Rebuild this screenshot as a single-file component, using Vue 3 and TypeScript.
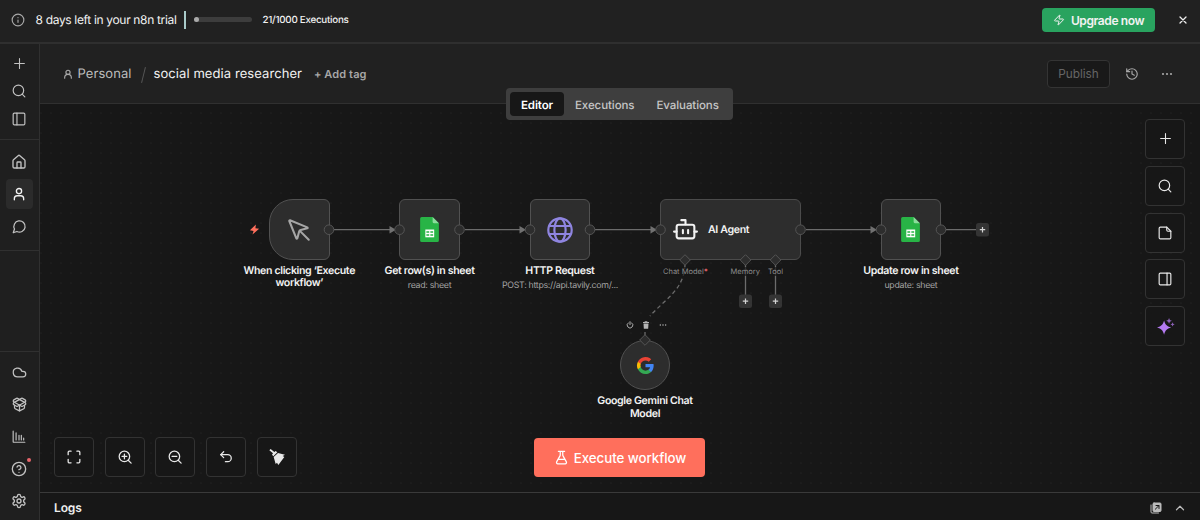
<script setup lang="ts">
import { h, type FunctionalComponent } from 'vue'

// Glyph bodies on a 24-unit grid, stroked with the current text colour.
const glyphs: Record<string, string> = {
  info: '<circle cx="12" cy="12" r="10"/><path d="M12 16v-4M12 8h.01"/>',
  plus: '<path d="M3 12h18M12 3v18"/>',
  search: '<circle cx="11" cy="11" r="9"/><path d="m22 22-4.6-4.6"/>',
  panelLeft: '<rect x="2" y="2" width="20" height="20" rx="2"/><path d="M8.500 2v20"/>',
  panelRight: '<rect x="2" y="2" width="20" height="20" rx="2"/><path d="M15.500 2v20"/>',
  home: '<path d="M15 21v-8a1 1 0 0 0-1-1h-4a1 1 0 0 0-1 1v8"/><path d="M3 10a2 2 0 0 1 .7-1.500l7-6a2 2 0 0 1 2.600 0l7 6A2 2 0 0 1 21 10v9a2 2 0 0 1-2 2H5a2 2 0 0 1-2-2z"/>',
  user: '<circle cx="12" cy="7" r="4.500"/><path d="M20 22v-2a5 5 0 0 0-5-5H9a5 5 0 0 0-5 5v2"/>',
  userSmall: '<circle cx="12" cy="8" r="5"/><path d="M4 22v-1a8 8 0 0 1 16 0v1"/>',
  chat: '<path d="M7.900 20A9 9 0 1 0 4 16.100L2 22Z"/>',
  cloud: '<path d="M17.500 19H9a7 7 0 1 1 6.710-9h1.790a4.500 4.500 0 1 1 0 9Z"/>',
  box: '<path d="M12 22v-9"/><path d="M15.170 2.210a1.670 1.670 0 0 1 1.630 0L21 4.570a1.930 1.930 0 0 1 0 3.360L8.820 14.790a1.655 1.655 0 0 1-1.640 0L3 12.430a1.930 1.930 0 0 1 0-3.360z"/><path d="M20 13v3.870a2.060 2.060 0 0 1-1.110 1.830l-6 3.080a1.930 1.930 0 0 1-1.780 0l-6-3.080A2.060 2.060 0 0 1 4 16.870V13"/><path d="M21 12.430a1.930 1.930 0 0 0 0-3.360L8.830 2.200a1.640 1.640 0 0 0-1.630 0L3 4.570a1.930 1.930 0 0 0 0 3.360l12.180 6.860a1.636 1.636 0 0 0 1.630 0z"/>',
  chart: '<path d="M2 2v18a1 1 0 0 0 1 1h19M7 5v12M12 9v8M16 9v8M20 14v3"/>',
  help: '<circle cx="12" cy="12" r="10"/><path d="M9.090 9a3 3 0 0 1 5.830 1c0 2-3 3-3 3M12 17h.01"/>',
  gear: '<path d="M12.220 2h-.44a2 2 0 0 0-2 2v.18a2 2 0 0 1-1 1.730l-.43.25a2 2 0 0 1-2 0l-.15-.08a2 2 0 0 0-2.730.73l-.22.38a2 2 0 0 0 .73 2.730l.15.1a2 2 0 0 1 1 1.720v.51a2 2 0 0 1-1 1.740l-.15.09a2 2 0 0 0-.73 2.730l.22.38a2 2 0 0 0 2.730.73l.15-.08a2 2 0 0 1 2 0l.43.25a2 2 0 0 1 1 1.730V20a2 2 0 0 0 2 2h.44a2 2 0 0 0 2-2v-.18a2 2 0 0 1 1-1.730l.43-.25a2 2 0 0 1 2 0l.15.08a2 2 0 0 0 2.730-.73l.22-.39a2 2 0 0 0-.73-2.730l-.15-.08a2 2 0 0 1-1-1.740v-.5a2 2 0 0 1 1-1.740l.15-.09a2 2 0 0 0 .73-2.730l-.22-.38a2 2 0 0 0-2.730-.73l-.15.08a2 2 0 0 1-2 0l-.43-.25a2 2 0 0 1-1-1.730V4a2 2 0 0 0-2-2z"/><circle cx="12" cy="12" r="3"/>',
  close: '<path d="M18 6 6 18M6 6l12 12"/>',
  zap: '<path d="M4 14a1 1 0 0 1-.78-1.630l9.900-10.200a.5.5 0 0 1 .86.46l-1.920 6.020A1 1 0 0 0 13 10h7a1 1 0 0 1 .78 1.630l-9.900 10.200a.5.5 0 0 1-.86-.46l1.920-6.020A1 1 0 0 0 11 14z"/>',
  bolt: '<path fill="currentColor" stroke="none" d="M15 1 2 13.500 10 15 7.500 23 22 10.500 14 9z"/>',
  history: '<path d="M3 12a9 9 0 1 0 9-9 9.750 9.750 0 0 0-6.740 2.740L3 8"/><path d="M3 3v5h5M12 7v5l4 2"/>',
  dots: '<g fill="currentColor" stroke="none"><circle cx="4" cy="12" r="2.200"/><circle cx="12" cy="12" r="2.200"/><circle cx="20" cy="12" r="2.200"/></g>',
  note: '<path d="M15 2H4a2 2 0 0 0-2 2v16a2 2 0 0 0 2 2h16a2 2 0 0 0 2-2V9z"/><path d="M15 2v5a2 2 0 0 0 2 2h5"/>',
  sparkles: '<g fill="currentColor" stroke="none"><path d="M10 3.500c1.800 6 3.500 8 10 10-6.500 2-8.200 4-10 10-1.800-6-3.500-8-10-10 6.500-2 8.200-4 10-10z"/><path opacity=".75" d="M17 0l1.200 2.800L21 4l-2.800 1.200L17 8l-1.200-2.800L13 4l2.800-1.200zM22 6l.9 2.100 2.100.9-2.100.9-.9 2.100-.9-2.100-2.100-.9 2.100-.9z"/></g>',
  fit: '<path d="M2 8V4a2 2 0 0 1 2-2h3M17 2h3a2 2 0 0 1 2 2v4M22 16v4a2 2 0 0 1-2 2h-3M7 22H4a2 2 0 0 1-2-2v-4"/>',
  zoomIn: '<circle cx="11" cy="11" r="9"/><path d="m22.500 22.500-5-5M11 7v8M7 11h8"/>',
  zoomOut: '<circle cx="11" cy="11" r="9"/><path d="m22.500 22.500-5-5M7 11h8"/>',
  undo: '<path d="M8 13 3 8l5-5"/><path d="M3 8h12a6 6 0 0 1 0 12h-4"/>',
  broom: '<g fill="currentColor" stroke="none"><path d="M2.500 0 8 4.500l2-1.500 2.500 2L6.500 11 4.500 8.500 6 6.500.5 2z"/><path d="m13.500 6 10.500 2.500-3.500 2 2.500 1.500L14 24l-2-3.500-2 2L7 12z"/></g>',
  flask: '<path d="M14 2v6a2 2 0 0 0 .25.960l5.510 10.080A2 2 0 0 1 18 22H6a2 2 0 0 1-1.760-2.960l5.510-10.080A2 2 0 0 0 10 8V2M7 2h10M6.500 15h11"/>',
  cursor: '<path d="M12.586 12.586 21 21M3.700 3.037a.5.5 0 0 0-.65.65l6.500 15.999a.5.5 0 0 0 .95-.06l1.570-6.080a2 2 0 0 1 1.480-1.480l6.080-1.570a.5.5 0 0 0 .06-.95z"/>',
  globe: '<circle cx="12" cy="12" r="10.800"/><ellipse cx="12" cy="12" rx="5.200" ry="10.800"/><path d="M2.500 8.300h19M2.500 15.700h19"/>',
  robot: '<path d="M12 7V3H8"/><rect x="3.500" y="7.500" width="17" height="13" rx="2"/><path d="M1 14h2.500M20.500 14H23M9.500 12.500v3M14.500 12.500v3"/>',
  power: '<path d="M12 2v9M7 5.500a8.500 8.500 0 1 0 10 0"/>',
  trash: '<path fill="currentColor" stroke="none" d="M8.500 1h7l1 2H21v3H3V3h4.500zM4.500 7.500h15L18.500 23h-13z"/>',
  popout: '<path d="M2 6v14a2 2 0 0 0 2 2h13"/><rect x="6" y="2" width="16" height="17" rx="2" fill="currentColor"/><path d="m10.500 14.500 7-7M12 7h6v6" stroke="#171717"/>',
  up: '<path d="m5 15.500 7-7 7 7"/>',
  sheet: '<g stroke="none"><path fill="#28b446" d="M4.500 0H15l6 6v16.500a1.500 1.500 0 0 1-1.500 1.500h-15A1.500 1.500 0 0 1 3 22.500v-21A1.500 1.500 0 0 1 4.500 0z"/><path fill="#8bdc9c" d="M15 0l6 6h-4.500A1.500 1.500 0 0 1 15 4.500z"/><path fill="#fff" d="M8 12h8.500v7.500H8z"/><path fill="#28b446" d="M9 13.700h2.700v1.500H9zM12.800 13.700h2.700v1.500h-2.700zM9 16.500h2.700V18H9zM12.800 16.500h2.700V18h-2.700z"/></g>',
  google: '<g stroke="none"><path fill="#4285f4" d="M23.500 12.300c0-.85-.08-1.670-.22-2.450H12v4.640h6.450a5.520 5.520 0 0 1-2.400 3.620v3h3.880c2.270-2.090 3.570-5.170 3.570-8.810z"/><path fill="#34a853" d="M12 24c3.240 0 5.960-1.070 7.940-2.910l-3.880-3c-1.070.72-2.450 1.150-4.060 1.150-3.130 0-5.780-2.110-6.720-4.950H1.270v3.100A12 12 0 0 0 12 24z"/><path fill="#fbbc05" d="M5.280 14.290a7.200 7.200 0 0 1 0-4.580v-3.100H1.270a12 12 0 0 0 0 10.780z"/><path fill="#ea4335" d="M12 4.770c1.760 0 3.340.61 4.590 1.800l3.440-3.440A12 12 0 0 0 1.270 6.610l4.010 3.100C6.220 6.870 8.870 4.770 12 4.770z"/></g>',
}

const Icon: FunctionalComponent<{ name: string; size?: number | string; weight?: number | string }> = (p) =>
  h('svg', {
    width: p.size ?? 14,
    height: p.size ?? 14,
    viewBox: '0 0 24 24',
    fill: 'none',
    stroke: 'currentColor',
    'stroke-width': p.weight ?? 2,
    'stroke-linecap': 'round',
    'stroke-linejoin': 'round',
    style: 'display:block;flex:none;overflow:visible',
    innerHTML: glyphs[p.name],
  })
Icon.props = ['name', 'size', 'weight']

const controls: [string, number][] = [['fit', 14], ['zoomIn', 14], ['zoomOut', 14], ['undo', 14], ['broom', 16]]
const tools: [string, number][] = [['plus', 13], ['search', 14], ['note', 14], ['panelRight', 14], ['sparkles', 17]]

interface FlowNode { x: number; kind: string; icon: string; size: number; weight: number; lines: string[]; sub?: string }
const nodes: FlowNode[] = [
  { x: 269, kind: 'trigger', icon: 'cursor', size: 26, weight: 1.9, lines: ['When clicking ‘Execute', 'workflow’'] },
  { x: 399.3, kind: 'sheets', icon: 'sheet', size: 25, weight: 2, lines: ['Get row(s) in sheet'], sub: 'read: sheet' },
  { x: 529.7, kind: 'http', icon: 'globe', size: 26, weight: 2, lines: ['HTTP Request'], sub: 'POST: https://api.tavily.com/...' },
  { x: 880.7, kind: 'sheets', icon: 'sheet', size: 25, weight: 2, lines: ['Update row in sheet'], sub: 'update: sheet' },
]
const links: [number, number][] = [[334, 391], [465, 521], [595, 652], [806, 872]]
const ports = [329, 399.5, 459.5, 530, 590, 660.5, 800.5, 881, 941]
const diamonds: [number, number][] = [[685, 260], [745.5, 260], [775.5, 260], [645, 340]]
const adders: [number, number][] = [[745.5, 301.5], [775.5, 301.5], [982.5, 230]]
</script>

<template>
  <div class="app">
    <div class="banner">
      <Icon name="info" :size="14" class="muted" />
      <span class="trial">8 days left in your n8n trial</span>
      <i class="caret"></i>
      <span class="progress"><i></i></span>
      <span class="count">21/1000 Executions</span>
      <button class="upgrade"><Icon name="zap" :size="12" /><span>Upgrade now</span></button>
      <Icon name="close" :size="12" weight="2.6" class="bright" />
    </div>
    <div class="body">
      <nav class="side">
        <div class="group top">
          <span class="item"><Icon name="plus" :size="13" /></span>
          <span class="item"><Icon name="search" :size="14" /></span>
          <span class="item"><Icon name="panelLeft" :size="14" /></span>
        </div>
        <div class="group mid">
          <span class="item"><Icon name="home" :size="16" /></span>
          <span class="item active"><Icon name="user" :size="14" weight="2.3" /></span>
          <span class="item"><Icon name="chat" :size="15" /></span>
        </div>
        <div class="group low">
          <span class="item"><Icon name="cloud" :size="15" /></span>
          <span class="item"><Icon name="box" :size="15" /></span>
          <span class="item"><Icon name="chart" :size="14" /></span>
          <span class="item"><Icon name="help" :size="16" /><i class="badge"></i></span>
          <span class="item"><Icon name="gear" :size="16" /></span>
        </div>
      </nav>
      <main class="main">
        <header class="head">
          <Icon name="userSmall" :size="10" weight="2.8" class="muted" />
          <span class="personal">Personal</span>
          <i class="slash"></i>
          <span class="title">social media researcher</span>
          <span class="tag">+ Add tag</span>
          <button class="publish"><span>Publish</span></button>
          <Icon name="history" :size="14" class="muted" />
          <Icon name="dots" :size="12" class="muted more" />
          <div class="tabs">
            <span class="tab on"><span>Editor</span></span>
            <span class="tab"><span>Executions</span></span>
            <span class="tab"><span>Evaluations</span></span>
          </div>
        </header>

        <section class="canvas">
          <svg class="edges" width="1160" height="388" viewBox="40 104 1160 388">
            <defs>
              <pattern id="grid" x="46" y="108" width="10" height="10" patternUnits="userSpaceOnUse">
                <circle cx="5" cy="5" r=".6" fill="#2b2b2b" />
              </pattern>
            </defs>
            <rect x="40" y="104" width="1160" height="388" fill="url(#grid)" />
            <g stroke="#6c6c6c" fill="none" stroke-width="1.3">
              <path v-for="l in links" :key="l[0]" :d="`M${l[0]} 229.700H${l[1]}`" />
              <path d="M946 229.700H976M745.500 264V295M775.500 264V295M645 332v5" />
              <path d="M685 265C684 290 664 300 650 316" stroke-dasharray="4 3" stroke="#6c6c6c" />
            </g>
            <path v-for="l in links" :key="l[1]" :d="`M${l[1] - 1.500} 226l6.500 3.700-6.500 3.700z`" fill="#707070" />
          </svg>

          <div v-for="n in nodes" :key="n.x" class="node" :class="n.kind" :style="{ left: n.x - 40 + 'px' }">
            <div class="tile"><Icon :name="n.icon" :size="n.size" :weight="n.weight" /></div>
            <div class="label">
              <span v-for="t in n.lines" :key="t">{{ t }}</span>
              <small v-if="n.sub">{{ n.sub }}</small>
            </div>
          </div>

          <div class="agent"><Icon name="robot" :size="25" weight="2" /><span>AI Agent</span></div>

          <div class="gemini">
            <div class="disc"><Icon name="google" :size="17" /></div>
            <div class="label"><span>Google Gemini Chat</span><span>Model</span></div>
          </div>
          <div class="actions">
            <Icon name="power" :size="8" weight="2.800" /><Icon name="trash" :size="8" /><Icon name="dots" :size="8" />
          </div>

          <svg class="edges" width="1160" height="388" viewBox="40 104 1160 388">
            <g fill="#2d2d2d" stroke="#555">
              <circle v-for="p in ports" :key="p" :cx="p" cy="229.700" r="4.800" />
              <path v-for="d in diamonds" :key="d[0]" :d="`M${d[0]} ${d[1] - 5.300}l5.300 5.300-5.300 5.300-5.300-5.300z`" />
            </g>
            <g v-for="a in adders" :key="a[0]">
              <rect :x="a[0] - 6.500" :y="a[1] - 7" width="13" height="13.500" rx="2.500" fill="#343434" />
              <path :d="`M${a[0] - 2.700} ${a[1] - .3}h5.400m-2.700-2.700v5.400`" stroke="#d4d4d4" stroke-width="1.200" />
            </g>
          </svg>
          <span class="port chat">Chat Model<b>*</b></span>
          <span class="port memory">Memory</span>
          <span class="port tool">Tool</span>
          <span class="spark"><Icon name="bolt" :size="11" /></span>

          <div class="tools">
            <button v-for="t in tools" :key="t[0]" class="sq" :class="t[0]"><Icon :name="t[0]" :size="t[1]" /></button>
          </div>
          <div class="controls">
            <button v-for="c in controls" :key="c[0]" class="sq"><Icon :name="c[0]" :size="c[1]" weight="2.200" /></button>
          </div>
          <button class="run"><Icon name="flask" :size="15" /><span>Execute workflow</span></button>
        </section>

        <footer class="logs">
          <span class="logs-title">Logs</span>
          <Icon name="popout" :size="12" />
          <Icon name="up" :size="12" weight="2.400" />
        </footer>
      </main>
    </div>
  </div>
</template>

<style>
html, body { background: #171717; overflow: hidden; }
</style>

<style scoped>
* { box-sizing: border-box; }
.app { width: 1200px; height: 520px; display: flex; flex-direction: column; background: #171717; color: #f2f2f2; font-family: Inter, "Liberation Sans", sans-serif; font-size: 12px; overflow: hidden; white-space: nowrap; text-rendering: geometricPrecision; }
button { font: inherit; color: inherit; border: 0; padding: 0; display: flex; align-items: center; justify-content: center; }
.muted { color: #a8a8a8; }
.bright { color: #eee; }
.banner { height: 44px; flex: none; padding: 0 11px 3px 11px; display: flex; align-items: center; background: #212121; border-bottom: 2px solid #2f2f2f; }
.trial { margin-left: 10.500px; width: 141px; font-size: 12px; letter-spacing: -.33px; }
.caret { width: 2px; height: 18px; margin-left: 7px; background: #a9cbc9; }
.progress { width: 58px; height: 5px; margin-left: 8px; border-radius: 3px; background: #3d3d3d; }
.progress i { display: block; width: 5px; height: 5px; border-radius: 50%; background: #aaa; }
.count { margin-left: 11px; padding-top: 2px; font-size: 9.800px; font-weight: 500; letter-spacing: -.26px; }
.upgrade { width: 113px; height: 24px; margin: 0 22px 0 auto; border-radius: 4px; background: #29a35f; gap: 6px; font-size: 12px; font-weight: 600; letter-spacing: -.4px; }
.upgrade span { padding-top: 1px; }
.body { flex: 1; display: flex; min-height: 0; }
.side { width: 40px; display: flex; flex-direction: column; background: #1f1f1f; border-right: 1px solid #303030; color: #c2c2c2; }
.group { display: flex; flex-direction: column; align-items: center; padding-right: 1px; }
.item { position: relative; width: 27px; height: 32px; display: flex; align-items: center; justify-content: center; border-radius: 4px; }
.top { height: 96px; padding-top: 5px; border-bottom: 1px solid #303030; }
.top .item { height: 28px; }
.mid { height: 111px; padding-top: 6px; border-bottom: 1px solid #303030; }
.mid .active { height: 30px; margin: 1px 0; background: #2b2b2b; color: #f2f2f2; }
.low { margin-top: auto; height: 169px; padding-top: 5px; border-top: 1px solid #303030; }
.low .item { height: 31.900px; }
.badge { position: absolute; right: 1.500px; top: 5px; width: 4px; height: 4px; border-radius: 50%; background: #e8656b; }
.main { flex: 1; display: flex; flex-direction: column; min-width: 0; }
.head { position: relative; height: 60px; flex: none; display: flex; align-items: center; padding: 0 27px 0 23px; background: #212121; border-bottom: 1px solid #303030; }
.personal { margin-left: 4.500px; width: 54px; font-size: 13px; letter-spacing: .06px; color: #bdbdbd; }
.slash { width: 1px; height: 16px; margin: 2px 10px 0 11px; background: #555; transform: rotate(14deg); }
.title { width: 148px; padding-top: 1px; font-size: 13px; letter-spacing: .08px; }
.tag { margin-left: 12.500px; font-size: 11px; font-weight: 600; letter-spacing: .1px; color: #a8a8a8; }
.publish { width: 63px; height: 28px; margin: 0 15px 0 auto; border: 1px solid #343434; border-radius: 4px; background: #191919; color: #666; font-size: 11.800px; }
.more { margin-left: 22px; }
.tabs { position: absolute; z-index: 2; left: 466px; top: 44px; width: 227px; height: 32px; padding: 4px; display: flex; border-radius: 4px; background: #3e3e3e; color: #c6c6c6; font-size: 11.500px; font-weight: 500; letter-spacing: -.08px; }
.tab { padding: 1px 11px 0; display: flex; align-items: center; justify-content: center; }
.tab.on { width: 54px; border-radius: 4px; background: #171717; color: #fff; font-weight: 600; }
.canvas { position: relative; flex: 1; }
.edges { position: absolute; left: 0; top: 0; pointer-events: none; }
.node { position: absolute; top: 95.300px; width: 60.500px; display: flex; flex-direction: column; align-items: center; }
.tile { width: 60.500px; height: 60.500px; display: flex; align-items: center; justify-content: center; background: #2d2d2d; border: 1.500px solid #515151; border-radius: 6px; }
.trigger .tile { border-radius: 24px 6px 6px 24px; color: #a6a6a6; }
.http .tile { color: #8f85e0; }
.label { display: flex; flex-direction: column; align-items: center; margin-top: 5px; font-size: 10.600px; line-height: 12.500px; font-weight: 600; letter-spacing: -.35px; }
.label small { font-size: 8.800px; line-height: 12px; margin-top: 2.500px; font-weight: 400; letter-spacing: -.3px; color: #a3a3a3; }
.agent { position: absolute; left: 620px; top: 95px; width: 141px; height: 61px; display: flex; align-items: center; gap: 10px; padding-left: 12px; background: #2d2d2d; border: 1.500px solid #4b4b4b; border-radius: 6px; font-size: 10.600px; font-weight: 600; letter-spacing: -.35px; }
.gemini { position: absolute; left: 580px; top: 236px; width: 50px; display: flex; flex-direction: column; align-items: center; }
.disc { width: 50px; height: 50px; flex: none; border-radius: 50%; display: flex; align-items: center; justify-content: center; background: #2d2d2d; border: 1.500px solid #515151; }
.actions { position: absolute; left: 585.500px; top: 216.500px; width: 41px; height: 8px; display: flex; align-items: center; justify-content: space-between; color: #b5b5b5; }
.port { position: absolute; top: 163px; font-size: 7.500px; line-height: 9px; color: #8c8c8c; background: rgba(23, 23, 23, .7); }
.port b { color: #e8656b; }
.chat.port { left: 623px; }
.memory { left: 690.500px; }
.tool { left: 728px; }
.spark { position: absolute; left: 208.500px; top: 119.500px; color: #ff6f5c; }
.tools { position: absolute; right: 15px; top: 14.800px; display: flex; flex-direction: column; gap: 6.900px; }
.controls { position: absolute; left: 14px; top: 333.300px; display: flex; gap: 10.700px; }
.sq { width: 40px; height: 40px; border: 1px solid #333; border-radius: 4px; background: #171717; color: #e8e8e8; }
.sq.sparkles { color: #b57bf2; }
.run { position: absolute; left: 494px; top: 334px; width: 171px; height: 39px; border-radius: 4px; background: #ff6f5c; color: #fff; gap: 5px; padding-left: 1px; font-size: 13.300px; font-weight: 500; letter-spacing: -.05px; }
.logs { height: 28px; flex: none; display: flex; align-items: center; gap: 12.500px; padding: 2px 14px 0 14px; border-top: 1px solid #3a3a3a; color: #bbb; }
.logs-title { margin-right: auto; font-size: 12px; font-weight: 600; letter-spacing: -.15px; color: #eee; }
</style>
